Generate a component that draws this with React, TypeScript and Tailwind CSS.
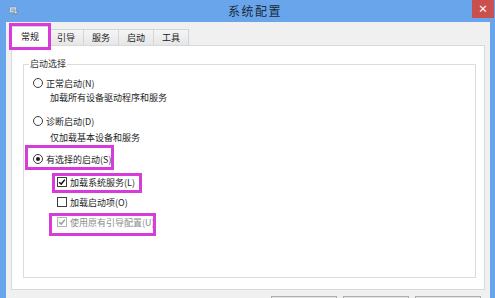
import { type ReactNode } from "react";

function Radio({ checked }: { checked?: boolean }) {
  return (
    <span className="flex h-[10px] w-[10px] shrink-0 items-center justify-center rounded-full border border-[#3c3c3c] bg-white">
      {checked && <span className="h-[4px] w-[4px] rounded-full bg-[#1a1a1a]" />}
    </span>
  );
}

function Checkbox({ checked, disabled }: { checked?: boolean; disabled?: boolean }) {
  return (
    <span
      className={
        "flex h-[10px] w-[10px] shrink-0 items-center justify-center border bg-white " +
        (disabled ? "border-[#b5b5b5]" : "border-[#3c3c3c]")
      }
    >
      {checked && (
        <svg viewBox="0 0 10 10" className="h-[8px] w-[8px]">
          <path
            d="M1.5 5.2 L4 7.6 L8.6 2"
            fill="none"
            stroke={disabled ? "#9a9a9a" : "#111"}
            strokeWidth="1.8"
          />
        </svg>
      )}
    </span>
  );
}

// annotation frame drawn over an item
function Mark({ className }: { className: string }) {
  return <span className={"pointer-events-none absolute border-[3px] border-[#d73bd9] " + className} />;
}

function Row({ children, className = "" }: { children: ReactNode; className?: string }) {
  return <div className={"relative flex h-[14px] w-fit items-center gap-[3px] " + className}>{children}</div>;
}

function Tab({ label }: { label: string }) {
  return (
    <div className="-ml-px flex h-[16px] items-center border border-b-0 border-[#d4d4d4] bg-gradient-to-b from-[#f5f5f5] to-[#e6e6e6] px-[8px] text-[#222]">
      {label}
    </div>
  );
}

export default function App() {
  return (
    <div className="flex h-[298px] w-[495px] flex-col overflow-hidden bg-[#68a5ea] font-['Noto_Sans_CJK_SC',sans-serif] text-[9px] leading-none">
      {/* title bar */}
      <div className="relative flex h-[22px] shrink-0 items-center">
        <svg viewBox="0 0 10 10" className="ml-[9px] h-[10px] w-[9px]">
          <rect x="0.5" y="0.5" width="8" height="6.5" rx="1" fill="#dfe8f2" stroke="#7b8ea6" />
          <rect x="2" y="2" width="5" height="3.5" fill="#8fb6df" />
          <rect x="3" y="7.5" width="3" height="2" fill="#8d9aab" />
          <circle cx="7.5" cy="6.5" r="1.6" fill="#f0f0f0" stroke="#666" strokeWidth="0.7" />
        </svg>
        <div className="flex-1 pl-[20px] text-center text-[12px] tracking-[1.5px] text-[#1b2a3b]">系统配置</div>
        <div className="mr-[1px] flex h-[18px] w-[22px] items-center justify-center self-start bg-[#c9504c] text-[10px] font-bold text-white">
          ×
        </div>
      </div>

      {/* body */}
      <div className="ml-[6px] mr-[5px] flex flex-1 flex-col bg-[#f0f0f0] px-[5px]">
        {/* tabs */}
        <div className="flex h-[23px] items-end">
          <div className="relative z-10 -mb-px flex h-[20px] items-center border border-b-0 border-[#d4d4d4] bg-white px-[9px] text-[#222]">
            常规
            <Mark className="-left-[3px] -top-[4px] h-[27px] w-[42px]" />
          </div>
          <Tab label="引导" />
          <Tab label="服务" />
          <Tab label="启动" />
          <Tab label="工具" />
        </div>

        {/* pane */}
        <div className="flex h-[245px] flex-col border border-[#d9d9d9] bg-white pb-[11px] pl-[11px] pr-[8px] pt-[18px]">
          <div className="relative flex flex-1 flex-col border border-[#dcdcdc] pl-[9px] pt-[11px] text-[#1e1e1e]">
            <span className="absolute -top-[6px] left-[5px] bg-white px-[1px] text-[#333]">启动选择</span>

            <Row>
              <Radio />
              <span>正常启动(N)</span>
            </Row>
            <Row className="pl-[17px]">加载所有设备驱动程序和服务</Row>

            <Row className="mt-[10px]">
              <Radio />
              <span>诊断启动(D)</span>
            </Row>
            <Row className="mt-[2px] pl-[17px]">仅加载基本设备和服务</Row>

            <Row className="mt-[8px]">
              <Radio checked />
              <span>有选择的启动(S)</span>
              <Mark className="-left-[8px] -top-[7px] h-[25px] w-[89px]" />
            </Row>

            <Row className="ml-[24px] mt-[9px]">
              <Checkbox checked />
              <span>加载系统服务(L)</span>
              <Mark className="-left-[5px] -top-[2px] h-[20px] w-[90px]" />
            </Row>
            <Row className="ml-[24px] mt-[6px]">
              <Checkbox />
              <span>加载启动项(O)</span>
            </Row>
            <Row className="ml-[24px] mt-[6px] text-[#8c8c8c]">
              <Checkbox checked disabled />
              <span>使用原有引导配置(U)</span>
              <Mark className="-left-[8px] -top-[2px] h-[23px] w-[107px]" />
            </Row>
          </div>
        </div>

        {/* buttons, mostly cut off */}
        <div className="mt-[6px] flex justify-end gap-[6px] pr-[4px]">
          <div className="h-[20px] w-[66px] border border-[#adadad] bg-[#e5e5e5]" />
          <div className="h-[20px] w-[66px] border border-[#adadad] bg-[#e5e5e5]" />
          <div className="h-[20px] w-[66px] border border-[#adadad] bg-[#e5e5e5]" />
        </div>
      </div>
    </div>
  );
}
